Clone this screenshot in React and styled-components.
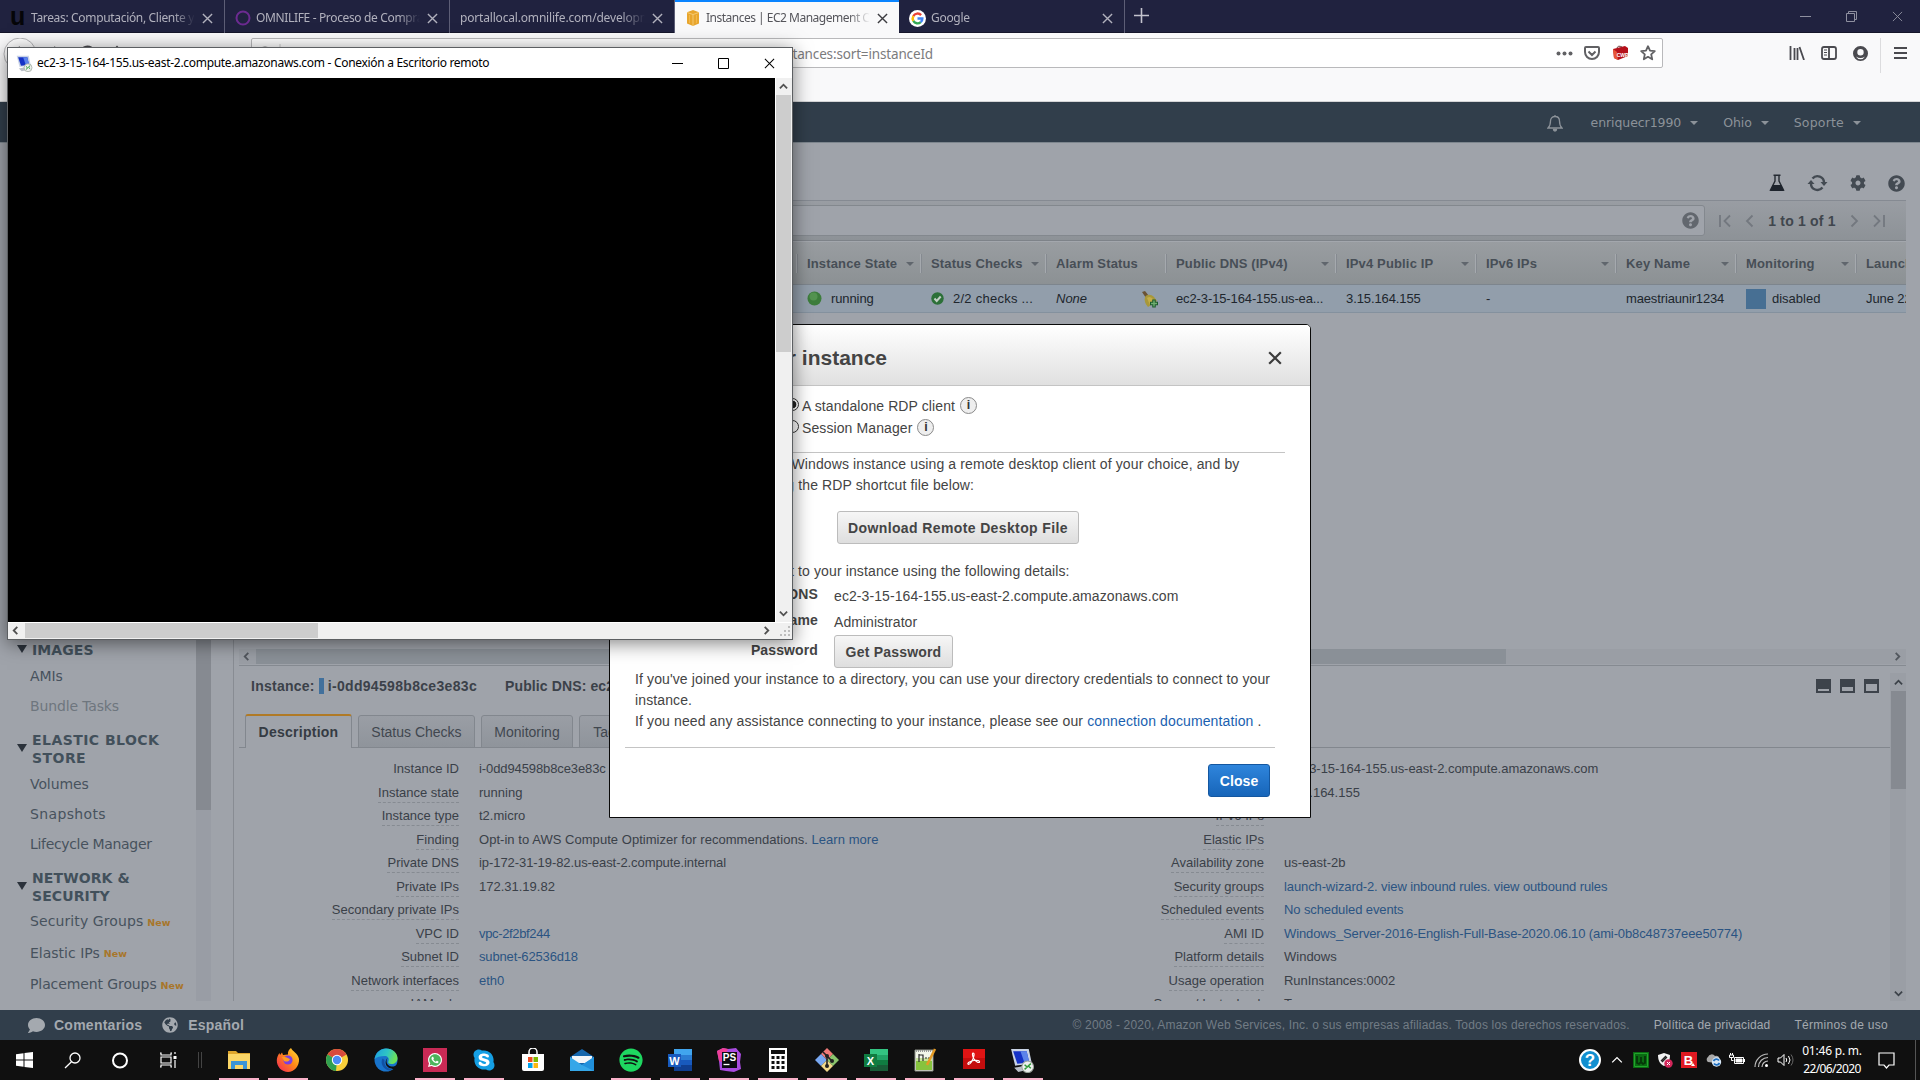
import React from "react";
import styled, { createGlobalStyle, css } from "styled-components";
import { FaQuestionCircle, FaCog, FaComment, FaGlobeAmericas, FaWhatsapp, FaSpotify, FaSkype } from "react-icons/fa";

const ui = `"Noto Sans", "Open Sans", sans-serif`;
const wide = `"DejaVu Sans", Verdana, sans-serif`;
const arial = `"Liberation Sans", Arial, sans-serif`;

const GlobalStyle = createGlobalStyle`
  * { box-sizing: border-box; }
  html, body { margin: 0; padding: 0; overflow: hidden; background: #101010; }
  p { margin: 0; }
`;

const Screen = styled.div`
  position: relative;
  width: 1920px;
  height: 1080px;
  overflow: hidden;
  display: flex;
  flex-direction: column;
  font-family: ${arial};
  background: #9fa3aa;
`;

const Txt = styled.span`
  letter-spacing: ${(p) => p.$ls || 0}px;
  white-space: nowrap;
`;

/* ---------- browser chrome ---------- */
const TabBar = styled.div`
  height: 33px;
  flex: none;
  display: flex;
  background: #20223f;
  border-bottom: 1px solid #15162a;
`;
const Tab = styled.div`
  width: ${(p) => p.$w || 225}px;
  height: 33px;
  display: flex;
  align-items: center;
  padding: 3px 11px 0 10px;
  border-right: 1px solid #5d5e76;
  color: #b1b1bd;
  font: 12px/20px ${ui};
  ${(p) =>
    p.$active &&
    css`
      background: #f9f9fa;
      border-right: 0;
      border-top: 2px solid #0a84ff;
      padding-top: 1px;
      color: #55555b;
    `}
`;
const TabTitle = styled.div`
  flex: 1;
  overflow: hidden;
  white-space: nowrap;
  margin: 0 7px 0 ${(p) => (p.$bare ? 0 : 5)}px;
  letter-spacing: ${(p) => p.$ls || 0}px;
  mask-image: linear-gradient(90deg, #000 87%, transparent 100%);
`;
const ULogo = styled.span`
  width: 16px;
  color: #050508;
  font: bold 25px/20px ${arial};
  margin-top: -5px;
`;
const NewTab = styled.div`
  padding: 8px 0 0 9px;
`;
const WindowButtons = styled.div`
  margin-left: auto;
  display: flex;
  align-items: center;
  gap: 35px;
  padding-right: 17px;
`;
const NavBar = styled.div`
  height: 69px;
  flex: none;
  display: flex;
  align-items: flex-start;
  padding: 5px 0 0 3px;
  background: #f9f9fa;
  border-bottom: 1px solid #d4d4d6;
`;
const NavButtons = styled.div`
  width: 248px;
  display: flex;
  align-items: center;
`;
const UrlBar = styled.div`
  width: 1412px;
  height: 30px;
  display: flex;
  align-items: center;
  background: #fff;
  border: 1px solid #b9b9bb;
  border-radius: 2px;
  padding-right: 6px;
`;
const Url = styled.div`
  width: 625px;
  display: flex;
  justify-content: flex-end;
  padding-top: 2px;
  color: #7b7b7d;
  font: 13.500px/20px ${ui};
`;
const UrlIcons = styled.div`
  margin-left: auto;
  display: flex;
  align-items: center;
  gap: 11.500px;
`;
const BrowserTools = styled.div`
  margin-left: 126px;
  display: flex;
  align-items: center;
  height: 30px;
  gap: 16px;
`;
const ToolSplit = styled.div`
  width: 1px;
  height: 35px;
  margin: 4px -3px 0 -4px;
  background: #dcdcde;
`;

/* ---------- console header ---------- */
const ConsoleNav = styled.div`
  height: 41px;
  flex: none;
  display: flex;
  align-items: center;
  justify-content: flex-end;
  background: #313e4b;
  border-bottom: 1px solid #7d868e;
  padding: 1px 59px 0 0;
  color: #8c9299;
  font: 12.500px/20px ${wide};
`;
const NavItem = styled.div`
  display: flex;
  align-items: center;
  gap: 9px;
  margin-left: ${(p) => p.$ml || 25}px;
`;
const Caret = styled.span`
  width: 0;
  height: 0;
  border: 4px solid transparent;
  border-top: 4.500px solid ${(p) => p.$c || "#8c9299"};
  border-bottom: 0;
`;

/* ---------- body ---------- */
const Body = styled.div`
  height: 867px;
  flex: none;
  display: flex;
`;
const Sidebar = styled.div`
  width: 234px;
  height: 858px;
  display: flex;
  overflow: hidden;
  border-right: 1px solid #888c93;
`;
const Menu = styled.div`
  width: 196px;
  flex: none;
  padding-top: 498px;
  font-family: ${wide};
`;
const MenuGroup = styled.div`
  padding-top: ${(p) => p.$top || 0}px;
`;
const MenuHeading = styled.div`
  display: flex;
  align-items: center;
  gap: 5px;
  padding-left: 17px;
  margin: ${(p) => p.$mt || 0}px 0 ${(p) => p.$mb || 0}px;
  color: #42505b;
  font: bold 14px/18px ${wide};
  letter-spacing: ${(p) => p.$ls || 0}px;
  white-space: nowrap;
`;
const Triangle = styled.span`
  border: 5px solid transparent;
  border-top: 8px solid #2b323b;
  border-bottom: 0;
  margin-top: -3px;
`;
const MenuItem = styled.div`
  height: ${(p) => p.$h || 30}px;
  display: flex;
  align-items: center;
  padding: 1px 0 0 30px;
  color: ${(p) => (p.$dim ? "#6e767e" : "#47525d")};
  font: 14px/20px ${wide};
`;
const NewMark = styled.span`
  margin: 3px 0 0 4px;
  color: #a8762b;
  font: bold 9.500px/14px ${wide};
`;
const MenuScroll = styled.div`
  width: 15px;
  background: #999da5;
`;
const MenuThumb = styled.div`
  height: 667px;
  background: #868a91;
`;

const Main = styled.div`
  width: 1667px;
  margin-left: 5px;
  height: 858px;
  display: flex;
  flex-direction: column;
`;
const Toolbar = styled.div`
  height: 57px;
  flex: none;
  display: flex;
  justify-content: flex-end;
  align-items: center;
  gap: 22px;
  padding: 23px 1px 0 0;
  color: #434a52;
`;
const FilterBar = styled.div`
  height: 41px;
  flex: none;
  display: flex;
  align-items: center;
  border-top: 1px solid #858a92;
  border-bottom: 1px solid #7e8389;
  background: linear-gradient(#999da3, #8d9297);
  padding-right: 21px;
`;
const Search = styled.div`
  width: 1466px;
  height: 31px;
  display: flex;
  align-items: center;
  justify-content: flex-end;
  padding-right: 5px;
  border: 1px solid #83888e;
  border-radius: 3px;
  background: #9fa3aa;
  color: #62676e;
`;
const Pager = styled.div`
  flex: 1;
  display: flex;
  align-items: center;
  justify-content: space-between;
  padding-left: 14px;
  color: #40464d;
  font: bold 14px/20px ${arial};
`;
const Row = styled.div`
  flex: none;
  height: ${(p) => (p.$head ? 43 : 29)}px;
  display: flex;
  overflow: hidden;
  padding-left: 557px;
  background: ${(p) => (p.$head ? "linear-gradient(#999da1, #8c9194)" : "#929eab")};
  border-top: 1px solid ${(p) => (p.$head ? "#a3a7ad" : "#7d858d")};
  border-bottom: ${(p) => (p.$head ? "0" : "1px solid #84919e")};
`;
const Cell = styled.div`
  flex: none;
  width: ${(p) => p.$w}px;
  display: flex;
  align-items: center;
  padding: 0 6px 0 11px;
  white-space: nowrap;
  overflow: hidden;
  color: #20262d;
  font: 13px/20px ${arial};
  letter-spacing: ${(p) => p.$ls || 0}px;
`;
const HeadCell = styled(Cell)`
  height: 19px;
  margin-top: 12px;
  justify-content: space-between;
  padding-left: 10px;
  border-left: 1px solid #a5a9ae;
  color: #474e56;
  font-weight: bold;
  box-shadow: inset 1px 0 #858a90;
`;
const Swatch = styled.span`
  width: 20px;
  height: 20px;
  margin: 1px 6px 0 0;
  background: #476f93;
`;
const Grow = styled.div`
  flex: 1;
`;
const HScroll = styled.div`
  height: 15px;
  flex: none;
  display: flex;
  align-items: center;
  margin-bottom: 1px;
  background: #9a9ea5;
  padding: 0 4px 0 3px;
`;
const HThumb = styled.div`
  width: ${(p) => p.$w}px;
  height: 15px;
  background: ${(p) => p.$c};
  margin: 0 auto 0 5px;
`;
const Details = styled.div`
  height: 336px;
  flex: none;
  display: flex;
  border-top: 1px solid #858a91;
`;
const DetailsMain = styled.div`
  width: 1651px;
  height: 335px;
  display: flex;
  flex-direction: column;
  overflow: hidden;
`;
const VScroll = styled.div`
  width: 16px;
  margin-top: 7px;
  display: flex;
  flex-direction: column;
  align-items: center;
  padding: 5px 0 3px;
  background: #9a9ea5;
`;
const VThumb = styled.div`
  width: 15px;
  height: 98px;
  margin: 4px 0 auto;
  background: #868a91;
`;
const Summary = styled.div`
  height: 40px;
  flex: none;
  display: flex;
  align-items: center;
  padding: 0 11px 0 12px;
  color: #3b4149;
  font: bold 14px/20px ${arial};
`;
const IdBar = styled.span`
  width: 5px;
  height: 16px;
  margin: 0 4px;
  background: #41709c;
`;
const PaneButtons = styled.div`
  margin: 0 0 1px auto;
  display: flex;
  gap: 9px;
`;
const PaneButton = styled.span`
  width: 15px;
  height: 14px;
  border: 2px solid #3d434b;
  border-top-width: ${(p) => p.$top}px;
`;
const Tabs = styled.div`
  height: 42px;
  flex: none;
  display: flex;
  align-items: flex-end;
  gap: 6px;
  padding-left: 6px;
  box-shadow: inset 0 -1px #82878e;
`;
const DetailTab = styled.div`
  width: ${(p) => p.$w}px;
  height: 33px;
  display: flex;
  align-items: center;
  justify-content: center;
  border: 1px solid #82878e;
  border-radius: 3px 3px 0 0;
  background: linear-gradient(#9a9ea5, #8f949b);
  color: #41474f;
  font: 14px/20px ${arial};
  ${(p) =>
    p.$active &&
    css`
      height: 34px;
      border-top: 2px solid #b07a26;
      border-bottom: 0;
      background: #9fa3aa;
      font-weight: bold;
      color: #353b43;
      letter-spacing: 0.25px;
    `}
`;
const Facts = styled.div`
  display: grid;
  grid-template-columns: 805px 1fr;
  padding-top: 9px;
`;
const Fact = styled.div`
  height: 23.500px;
  display: grid;
  grid-template-columns: 220px 1fr;
  column-gap: 20px;
  align-items: center;
  color: #3a4048;
  font: 13px/17px ${arial};
`;
const FactLabel = styled.span`
  justify-self: end;
  padding-bottom: 1px;
  margin-top: 2px;
  border-bottom: 1px dashed ${(p) => (p.$plain ? "transparent" : "#868b92")};
`;
const Link = styled.span`
  color: ${(p) => p.$c || "#2b5482"};
`;
const Footer = styled.div`
  height: 30px;
  flex: none;
  display: flex;
  align-items: center;
  background: #313e4b;
  padding: 0 32px 0 28px;
  color: #a4a9af;
  font: bold 14px/20px ${arial};
`;
const Legal = styled.div`
  margin-left: auto;
  display: flex;
  gap: 24px;
  font: 12px/20px ${arial};
`;
const Dim = styled(Txt)`
  color: #727c85;
`;
const Gap = styled.span`
  width: ${(p) => p.$w}px;
  flex: none;
`;

/* ---------- modal ---------- */
const Modal = styled.div`
  position: absolute;
  left: 609px;
  top: 324px;
  width: 702px;
  height: 494px;
  display: flex;
  flex-direction: column;
  background: #fff;
  border: 1px solid #0a0a0a;
  border-radius: 5px 5px 0 0;
  overflow: hidden;
  color: #444;
  font: 14px/21px ${arial};
`;
const ModalHead = styled.div`
  height: 61px;
  flex: none;
  display: flex;
  align-items: center;
  justify-content: space-between;
  padding: 5px 28px 0 25px;
  background: linear-gradient(#fff, #e0e0e0);
  border-bottom: 1px solid #c4c4c4;
  font: bold 21px/26px ${arial};
`;
const ModalBody = styled.div`
  padding: 9px 25px 0;
  display: flex;
  flex-direction: column;
  white-space: nowrap;
  letter-spacing: ${(p) => p.$ls || 0}px;
`;
const RadioRow = styled.div`
  height: 22px;
  display: flex;
  align-items: center;
  padding-left: 151px;
  letter-spacing: 0.1px;
`;
const Radio = styled.span`
  width: 13px;
  height: 13px;
  border: 1px solid #333;
  border-radius: 50%;
  margin: 0 3px 3px 0;
  background: ${(p) => (p.$on ? "radial-gradient(#222 0 3.5px, #fff 4.2px)" : "#fff")};
`;
const Info = styled.span`
  width: 17px;
  height: 17px;
  margin: 0 0 2px 5px;
  border: 1px solid #8a8a8a;
  border-radius: 50%;
  background: #eee;
  color: #333;
  text-align: center;
  font: bold 12.500px/15px ${arial};
`;
const Rule = styled.div`
  height: 1px;
  flex: none;
  margin: ${(p) => p.$m};
  background: #c4c4c4;
`;
const Button = styled.div`
  width: ${(p) => p.$w}px;
  height: 33px;
  flex: none;
  margin: ${(p) => p.$m || 0};
  display: flex;
  align-items: center;
  justify-content: center;
  border: 1px solid ${(p) => (p.$primary ? "#1457a0" : "#bcbcbc")};
  border-radius: 3px;
  background: ${(p) => (p.$primary ? "linear-gradient(#2f85dc, #1765b9)" : "linear-gradient(#f6f6f6, #dedede)")};
  color: ${(p) => (p.$primary ? "#fff" : "#444")};
  font: bold 14px/20px ${arial};
  letter-spacing: ${(p) => p.$ls || 0}px;
`;
const Credential = styled.div`
  height: ${(p) => p.$h || 25}px;
  display: grid;
  grid-template-columns: 183px 1fr;
  column-gap: 16px;
  align-items: center;
`;
const CredLabel = styled.b`
  text-align: right;
  margin-top: ${(p) => p.$mt ?? -4}px;
`;

/* ---------- remote desktop window ---------- */
const RdpWindow = styled.div`
  position: absolute;
  left: 7px;
  top: 47px;
  width: 786px;
  height: 593px;
  display: flex;
  flex-direction: column;
  border: 1px solid #5c5f62;
  background: #f0f0f0;
  box-shadow: 0 3px 18px rgba(0, 0, 0, 0.5);
`;
const RdpTitle = styled.div`
  height: 30px;
  flex: none;
  display: flex;
  align-items: center;
  padding: 0 17px 0 8px;
  background: #fff;
  color: #000;
  font: 12px/20px ${ui};
`;
const RdpButtons = styled.div`
  margin-left: auto;
  display: flex;
  gap: 35px;
`;
const RdpRow = styled.div`
  display: flex;
  height: 544px;
`;
const RdpScreen = styled.div`
  width: 767px;
  background: #000;
`;
const RdpV = styled.div`
  flex: 1;
  display: flex;
  flex-direction: column;
  align-items: center;
  padding: 4px 1px 4px 0;
  border-left: 1px solid #fff;
`;
const RdpVThumb = styled.div`
  width: 15px;
  height: 257px;
  margin: 4px 0 auto;
  background: #cdcdcd;
`;
const RdpH = styled.div`
  height: 16px;
  display: flex;
  align-items: center;
  padding: 0 2px 0 3px;
  border-top: 1px solid #fff;
`;

/* ---------- taskbar ---------- */
const Taskbar = styled.div`
  height: 40px;
  flex: none;
  display: flex;
  background: #101010;
  color: #fff;
`;
const Apps = styled.div`
  display: flex;
  padding-left: ${(p) => p.$pl || 0}px;
`;
const AppButton = styled.div`
  width: 49px;
  height: 40px;
  display: flex;
  align-items: center;
  justify-content: center;
  padding: 0 4.500px;
  background: ${(p) => (p.$open ? "linear-gradient(#f9b1c9, #f9b1c9) center bottom / 40px 2px no-repeat" : "none")};
`;
const SystemButton = styled.div`
  width: 48px;
  height: 40px;
  display: flex;
  align-items: center;
  justify-content: center;
`;
const Splitter = styled.div`
  width: 4px;
  height: 16px;
  margin: 12px 0 0 6px;
  border: solid #444;
  border-width: 0 1px;
`;
const Tray = styled.div`
  margin-left: auto;
  display: flex;
  align-items: center;
`;
const TrayIcon = styled.div`
  width: ${(p) => p.$w || 24}px;
  display: flex;
  justify-content: center;
`;
const Clock = styled.div`
  width: 70px;
  text-align: center;
  white-space: nowrap;
  font: 12px/18px ${ui};
  letter-spacing: ${(p) => p.$ls || 0}px;
`;
const EndLine = styled.div`
  width: 5px;
  height: 40px;
  margin-left: 20px;
  border-left: 1px solid #555;
`;

/* ---------- icons ---------- */
const Cross = ({ s = 11, c = "currentColor", w = 1.5 }) => (
  <svg width={s} height={s} viewBox="0 0 12 12" stroke={c} strokeWidth={w}>
    <path d="M1 1l10 10M11 1L1 11" />
  </svg>
);
const Chevron = ({ r = 0, s = 9, c = "#505050", w = 2 }) => (
  <svg width={s} height={s} viewBox="0 0 10 10" fill="none" stroke={c} strokeWidth={w}>
    <path d="M1 7l4-4 4 4" transform={`rotate(${r} 5 5)`} />
  </svg>
);
const PageArrow = ({ d }) => (
  <svg width="12" height="14" viewBox="0 0 12 14" fill="none" stroke="#73787f" strokeWidth="1.8">
    <path d={d} />
  </svg>
);
const BackIcons = () => (
  <svg width="240" height="34" viewBox="0 0 240 34" fill="none" stroke="#4a4a4f" strokeWidth="2">
    <circle cx="17" cy="16" r="16" fill="#fff" stroke="#b5b5b8" strokeWidth="1" />
    <path d="M17 9l-6 6 6 6M11 15h13M51 9l6 6-6 6M44 15h13M91 13a7 7 0 1 0 0 5M107 17l7-8 7 8" />
  </svg>
);
const UrlLead = () => (
  <svg width="56" height="26" viewBox="0 0 56 26" fill="none" stroke="#6a6a6d" strokeWidth="2">
    <circle cx="13" cy="14" r="6.5" />
    <path d="M28 4v20" stroke="#ccc" strokeWidth="1" />
    <path d="M38 14v-2a4 4 0 0 1 8 0v2M36 14h12v8H36z" />
  </svg>
);
const AwsCube = () => (
  <svg width="16" height="16" viewBox="0 0 16 16">
    <path d="M8 0l6 2.200v11.300L8 16l-6-2.500V2.200z" fill="#e8a62e" />
    <path d="M8 4.500V16M2 2.500l6 2 6-2" stroke="#f9d384" fill="none" strokeWidth=".8" />
    <path d="M4.500 5v8M11.500 5v8" stroke="#f5bd52" strokeWidth=".8" />
  </svg>
);
const Google = () => (
  <svg width="17" height="17" viewBox="0 0 18 18">
    <circle cx="9" cy="9" r="9" fill="#fff" />
    <g fill="none" strokeWidth="2.6">
      <path d="M4.600 6.400A5.100 5.100 0 0 1 12.800 5.400" stroke="#ea4335" />
      <path d="M4.600 6.400a5.400 5.400 0 0 0 0 5.200" stroke="#fbbc05" />
      <path d="M4.600 11.600a5.100 5.100 0 0 0 7.800 1.300" stroke="#34a853" />
      <path d="M9 9h5.100a5 5 0 0 1-1.700 3.900" stroke="#4285f4" />
    </g>
  </svg>
);
const Flask = () => (
  <svg width="16" height="18" viewBox="0 0 16 18">
    <path d="M4.500 1.200h7M6 1.500v5.500L1.500 16h13L10 7V1.500" fill="none" stroke="#252b33" strokeWidth="1.400" />
    <path d="M3.700 11h8.600l2.700 6H1z" fill="#1d232c" />
  </svg>
);
const Refresh = () => (
  <svg width="21" height="18" viewBox="0 0 21 18" fill="none" stroke="#434a52" strokeWidth="2.400">
    <path d="M5.500 4.600A6.500 6.500 0 0 1 17 9M15.500 13.600A6.500 6.500 0 0 1 4 9" />
    <path d="M13.500 8h7L17 12zM.5 10h7L4 6z" fill="#434a52" stroke="none" />
  </svg>
);
const Bell = () => (
  <svg width="16" height="18" viewBox="0 0 16 18" fill="none" stroke="#8c9299" strokeWidth="1.300">
    <path d="M8 1v1.500M1 14c2.300-2 2.500-4 2.500-7 0-3 2-4.500 4.500-4.500S12.500 4 12.500 7c0 3 .2 5 2.500 7z" />
    <path d="M6.500 15.500a1.500 1.500 0 0 0 3 0z" fill="#8c9299" />
  </svg>
);
const AlarmBell = () => (
  <svg width="18" height="18" viewBox="0 0 18 18">
    <path d="M1 2l3-1 4 5-3 2z" fill="#6b5335" />
    <path d="M4 7c2-3 6-3 9 0l3 4-9 6C4 14 3 10 4 7z" fill="#a8983a" />
    <path d="M6 8c2-2 4-1 6 1l-3 6z" fill="#c4ad48" />
    <path d="M13 9.500v8M9 13.500h8" stroke="#1e5c2f" strokeWidth="3.500" />
    <path d="M13 10.500v6M10 13.500h6" stroke="#6fae70" strokeWidth="1.400" />
  </svg>
);
const RdpIcon = ({ s = 17 }) => (
  <svg width={s} height={s} viewBox="0 0 24 24">
    <path d="M1 1h17l3 14-16 2z" fill="#c9d3e6" />
    <path d="M3 3h13l2.500 11-11.500 1z" fill="#1532c6" />
    <path d="M10 3h6l2.500 11-4.500.5z" fill="#5c83ea" />
    <path d="M4 19l10-2 2 4-8 2z" fill="#b9bfc8" />
    <circle cx="17" cy="18" r="5.600" fill="#eef0ee" stroke="#9aa39a" />
    <path d="M14 16l2.500 2.300L14 20.500M20 15l-2.500 2.200L20 19.500" stroke="#2e9c38" strokeWidth="1.400" fill="none" />
  </svg>
);

const Svg24 = ({ children, s = 24 }) => (
  <svg width={s} height={s} viewBox="0 0 24 24">
    {children}
  </svg>
);
const Glyph = styled.text`
  font-family: ${arial};
  font-weight: bold;
  text-anchor: middle;
`;

const icons = {
  folder: (
    <Svg24>
      <path d="M1 3h8l2 2h12v16H1z" fill="#dfa62c" />
      <path d="M1 6h22v15H1z" fill="#fbd667" />
      <path d="M4 21v-8h16v8h-4v-4H8v4z" fill="#3b94d6" />
    </Svg24>
  ),
  firefox: (
    <Svg24>
      <defs>
        <linearGradient id="ff" x1="1" y1="0" x2="0" y2="1">
          <stop offset="0" stopColor="#ffe33d" />
          <stop offset=".45" stopColor="#ff8b16" />
          <stop offset="1" stopColor="#f4205b" />
        </linearGradient>
      </defs>
      <path d="M15 0c1 3 7 5 8 11 .6 7-5 13-11 13S.5 19 .8 12C1 9 2 7 3.500 5l.5 2 2-2.500 1 2.500 5-.5c-.5-3 1-5 3-6.500z" fill="url(#ff)" />
      <circle cx="12" cy="12" r="4.600" fill="#7b3fe0" />
      <path d="M6 9c3-1 5 1 8 2-1 3-4 3-6 2z" fill="#ff9a1f" />
    </Svg24>
  ),
  chrome: (
    <Svg24>
      <circle cx="12" cy="12" r="11" fill="#f8cf3a" />
      <path d="M12 12L2.500 6.500a11 11 0 0 1 19 0z" fill="#d94b3d" />
      <path d="M12 12L2.500 6.500A11 11 0 0 0 11 23z" fill="#30a050" />
      <circle cx="12" cy="12" r="5.200" fill="#fff" />
      <circle cx="12" cy="12" r="4.200" fill="#4c8bf5" />
    </Svg24>
  ),
  edge: (
    <Svg24>
      <defs>
        <linearGradient id="ed" x1="0" y1="0" x2="1" y2=".3">
          <stop offset="0" stopColor="#1b9de2" />
          <stop offset=".6" stopColor="#2fc6c3" />
          <stop offset="1" stopColor="#6be05a" />
        </linearGradient>
      </defs>
      <circle cx="12" cy="12" r="11.500" fill="#1873cb" />
      <path d="M.6 11C2 4 7 .5 12 .5c7 0 11.500 5 11.500 9.500 0 4-3 6-6 6-3 0-4-1-3-3 1-3-1-5-4-5-4 0-8 1-9.900 3z" fill="url(#ed)" />
      <path d="M13.500 10c-2.500 4 0 8 4 8.500 2 .3 4-.5 6-2l1 3-3 3-4-2c-5-.5-8-6-4-10.500z" fill="#101010" />
      <path d="M8.500 10.500c-2.500 4.500.5 11 7 12l4-1.500c-6 1-10-4-9-9z" fill="#1251a4" />
    </Svg24>
  ),
  word: ["#185abd", "#41a5ee", "#2b7cd3", "#103f91", "W"],
  excel: ["#107c41", "#33c481", "#21a366", "#185c37", "X"],
};
const Office = ({ v }) => (
  <Svg24>
    <path d="M6 1h18v6H6z" fill={v[1]} />
    <path d="M6 7h18v5H6z" fill={v[2]} />
    <path d="M6 12h18v5H6z" fill={v[0]} />
    <path d="M6 17h18v6H6z" fill={v[3]} />
    <path d="M0 6h13v13H0z" fill={v[0]} />
    <Glyph x="6.500" y="16.500" fontSize="11" fill="#fff">{v[4]}</Glyph>
  </Svg24>
);
const apps = [
  [icons.folder, 1],
  [icons.firefox, 1],
  [icons.chrome, 0],
  [icons.edge, 0],
  [
    <Svg24>
      <path d="M0 0h24v24H0z" fill="#c92a55" />
      <circle cx="12" cy="12" r="6.500" fill="#4cb55b" />
      <FaWhatsapp x="4" y="4" size={16} color="#fff" />
    </Svg24>,
    1,
  ],
  [
    <Svg24>
      <circle cx="12" cy="12" r="8" fill="#fff" />
      <FaSkype x="0" y="0" size={24} color="#159fe4" />
    </Svg24>,
    1,
  ],
  [
    <Svg24>
      <path d="M8 7V4a4 4 0 0 1 8 0v3" fill="none" stroke="#fff" strokeWidth="1.500" />
      <path d="M1 6h22v15q0 2-2 2H3q-2 0-2-2z" fill="#fff" />
      <path d="M7 9h4.500v5H7z" fill="#f04e23" />
      <path d="M12.500 9H17v5h-4.500z" fill="#7fb900" />
      <path d="M7 15h4.500v5H7z" fill="#00a3ee" />
      <path d="M12.500 15H17v5h-4.500z" fill="#fdb813" />
    </Svg24>,
    0,
  ],
  [
    <Svg24>
      <path d="M0 9l12-8 12 8v14H0z" fill="#1466ad" />
      <path d="M2 8h20v7H2z" fill="#f1f5f9" />
      <path d="M0 9l12 8 12-8v14H0z" fill="#35a7e8" />
      <path d="M12 17l12-8v14z" fill="#2190db" />
    </Svg24>,
    0,
  ],
  [<FaSpotify size={24} color="#1ed760" />, 1],
  [<Office v={icons.word} />, 1],
  [
    <Svg24>
      <path d="M0 3L6 0l5 1 8-1 5 6-1 8 1 7-7 3-8-1-6-1-1-9z" fill="#a94ce0" />
      <path d="M0 3L6 0l5 1-6 13-3-1z" fill="#ee3f96" />
      <path d="M5 4h15v16H5z" fill="#0c0c10" />
      <Glyph x="12.500" y="13" fontSize="10" fill="#fff">PS</Glyph>
      <path d="M6.500 16.500h6" stroke="#fff" strokeWidth="1.300" />
    </Svg24>,
    1,
  ],
  [
    <Svg24>
      <path d="M3 0h18v24H3z" fill="#fff" />
      <path d="M5 2h14v4H5z" fill="#111" />
      <path d="M5.500 9.500h13M5.500 14.500h13M5.500 19.500h13" stroke="#111" strokeWidth="3" strokeDasharray="3 2" />
    </Svg24>,
    1,
  ],
  [
    <Svg24>
      <path d="M12 0l6 6-6 6-6-6z" fill="#ef7a78" />
      <path d="M6 6l6 6-6 6-6-6z" fill="#79a8f2" />
      <path d="M18 6l6 6-6 6-6-6z" fill="#8ac46c" />
      <path d="M12 12l6 6-6 6-6-6z" fill="#f2d98a" />
      <path d="M8 4l4 4v11M12 8l5 5" stroke="#222" strokeWidth="1.600" fill="none" />
      <circle cx="12" cy="8" r="2" fill="#222" />
      <circle cx="12" cy="18" r="2" fill="#222" />
      <circle cx="17" cy="13" r="2" fill="#222" />
    </Svg24>,
    1,
  ],
  [<Office v={icons.excel} />, 1],
  [
    <Svg24>
      <path d="M2 2h18v21H2z" fill="#f3f6ea" stroke="#8b8f86" />
      <path d="M3 13h16v9H3z" fill="#86c33e" />
      <path d="M3 10h16v3H3z" fill="#c7e29c" />
      <path d="M6 6v8M6 7h4v6M12 10h2M15 10h2" stroke="#2a2a2a" strokeWidth="1.200" fill="none" />
      <path d="M3 3h16" stroke="#999" strokeWidth="2" strokeDasharray="1 1" />
      <path d="M22 1l-8 16" stroke="#e59b25" strokeWidth="2.500" />
    </Svg24>,
    1,
  ],
  [
    <Svg24>
      <path d="M1 1h22v20H1z" fill="#c40d0d" />
      <path d="M1 1h22v9H1z" fill="#e01414" />
      <path d="M11 5c2 0 1 4-1 8-1 2-3 4-4 3s3-3 6-3.500 6 0 5.500 1.500-4-.5-5.500-3S10 5 11 5z" fill="none" stroke="#fff" strokeWidth="1.200" />
    </Svg24>,
    1,
  ],
  [<RdpIcon s={25} />, 1],
];

/* ---------- data ---------- */
const columns = [
  ["Instance State", 124, 1],
  ["Status Checks", 125, 1],
  ["Alarm Status", 120, 0],
  ["Public DNS (IPv4)", 170, 1],
  ["IPv4 Public IP", 140, 1],
  ["IPv6 IPs", 140, 1],
  ["Key Name", 120, 1],
  ["Monitoring", 120, 1],
  ["Launch Time", 120, 0],
];
const leftFacts = [
  ["Instance ID", "i-0dd94598b8ce3e83c", -0.1],
  ["Instance state", "running"],
  ["Instance type", "t2.micro"],
  ["Finding", <>Opt-in to AWS Compute Optimizer for recommendations. <Link>Learn more</Link></>, 0.04],
  ["Private DNS", "ip-172-31-19-82.us-east-2.compute.internal", -0.07],
  ["Private IPs", "172.31.19.82"],
  ["Secondary private IPs", ""],
  ["VPC ID", <Link>vpc-2f2bf244</Link>, -0.35],
  ["Subnet ID", <Link>subnet-62536d18</Link>, -0.15],
  ["Network interfaces", <Link>eth0</Link>],
  ["IAM role", ""],
];
const rightFacts = [
  ["Public DNS (IPv4)", "ec2-3-15-164-155.us-east-2.compute.amazonaws.com", -0.03],
  ["IPv4 Public IP", "3.15.164.155"],
  ["IPv6 IPs", ""],
  ["Elastic IPs", ""],
  ["Availability zone", "us-east-2b"],
  ["Security groups", <Link>launch-wizard-2. view inbound rules. view outbound rules</Link>, -0.11],
  ["Scheduled events", <Link>No scheduled events</Link>, -0.1],
  ["AMI ID", <Link>Windows_Server-2016-English-Full-Base-2020.06.10 (ami-0b8c48737eee50774)</Link>, -0.12],
  ["Platform details", "Windows"],
  ["Usage operation", "RunInstances:0002", -0.05],
  ["Source/dest. check", "True"],
];
const FactList = ({ items }) => (
  <div>
    {items.map(([k, v, ls], i) => (
      <Fact key={k}>
        <FactLabel $plain={i === 0}>{k}</FactLabel>
        <Txt $ls={ls}>{v}</Txt>
      </Fact>
    ))}
  </div>
);

function Browser() {
  return (
    <>
      <TabBar>
        <Tab>
          <ULogo>u</ULogo>
          <TabTitle $ls={-0.33}>Tareas: Computación, Cliente y</TabTitle>
          <Cross />
        </Tab>
        <Tab>
          <svg width="16" height="16" viewBox="0 0 16 16"><circle cx="8" cy="8" r="6.500" fill="none" stroke="#6c2b91" strokeWidth="2" /></svg>
          <TabTitle $ls={-0.35}>OMNILIFE - Proceso de Compras</TabTitle>
          <Cross />
        </Tab>
        <Tab>
          <TabTitle $bare $ls={-0.18}>portallocal.omnilife.com/development</TabTitle>
          <Cross />
        </Tab>
        <Tab $active $w={224}>
          <AwsCube />
          <TabTitle $ls={-0.5}>Instances | EC2 Management Console</TabTitle>
          <Cross c="#3c3c40" />
        </Tab>
        <Tab $w={226}>
          <Google />
          <TabTitle $ls={-0.3}>Google</TabTitle>
          <Cross />
        </Tab>
        <NewTab>
          <svg width="15" height="15" viewBox="0 0 15 15" stroke="#c3c3cd" strokeWidth="1.600"><path d="M7.500 0v15M0 7.500h15" /></svg>
        </NewTab>
        <WindowButtons>
          <svg width="11" height="11" stroke="#8f90a0"><path d="M0 5.500h11" /></svg>
          <svg width="11" height="11" viewBox="0 0 11 11" fill="none" stroke="#8f90a0"><path d="M.5 2.500h8v8h-8zM2.500 2.500v-2h8v8h-2" /></svg>
          <Cross c="#8f90a0" w={1} />
        </WindowButtons>
      </TabBar>
      <NavBar>
        <NavButtons><BackIcons /></NavButtons>
        <UrlBar>
          <UrlLead />
          <Url><Txt $ls={-0.15}>https://us-east-2.console.aws.amazon.com/ec2/v2/home?region=us-east-2#Instances:sort=instanceId</Txt></Url>
          <UrlIcons>
            <svg width="17" height="5" fill="#616164"><circle cx="2.500" cy="2.500" r="2" /><circle cx="8.500" cy="2.500" r="2" /><circle cx="14.500" cy="2.500" r="2" /></svg>
            <svg width="16" height="15" viewBox="0 0 16 15" fill="none" stroke="#616164" strokeWidth="2"><path d="M2 1h12q1 0 1 1v4a7 7 0 0 1-14 0V2q0-1 1-1zM4.500 5.500L8 9l3.500-3.500" /></svg>
            <svg width="17" height="16" viewBox="0 0 17 16"><path d="M1 4l12-3 3 2v8l-10 4-4-2z" fill="#b5101a" /><path d="M1 4l4 3 1 8-4-2z" fill="#e85538" /><path d="M5 3q1-3 5-1" stroke="#704040" fill="none" /><Glyph x="10.500" y="12" fontSize="5" fill="#fff">CWP</Glyph></svg>
            <svg width="16" height="16" viewBox="0 0 16 16" fill="none" stroke="#616164" strokeWidth="1.800" strokeLinejoin="round"><path d="M8 1.200l2 4.500 4.800.5-3.600 3.200 1 4.900L8 11.800l-4.200 2.500 1-4.900L1.200 6.200 6 5.700z" /></svg>
          </UrlIcons>
        </UrlBar>
        <BrowserTools>
          <svg width="16" height="14" viewBox="0 0 16 14" stroke="#4a4a4f" strokeWidth="1.800"><path d="M1.500 0v14M5.500 2v12M8.500 2v12M10.500 1l4.500 13" /></svg>
          <svg width="16" height="14" viewBox="0 0 16 14" fill="none" stroke="#4a4a4f" strokeWidth="1.800"><path d="M3 1h10q2 0 2 2v8q0 2-2 2H3q-2 0-2-2V3q0-2 2-2zM8 1v12" /><path d="M3 4h3M3 6.500h3M3 9h3" strokeWidth="1" /></svg>
          <svg width="15" height="15" viewBox="0 0 15 15" fill="#4a4a4f"><path fillRule="evenodd" d="M7.500 0a7.500 7.500 0 1 0 0 15 7.500 7.500 0 0 0 0-15zM7.500 3a3.200 3.200 0 1 1 0 6.400A3.200 3.200 0 0 1 7.500 3zM3 10.500q4.500 3 9 0-1.500 2.800-4.500 2.800T3 10.500z" /></svg>
          <ToolSplit />
          <svg width="13" height="12" stroke="#4a4a4f" strokeWidth="2"><path d="M0 1h13M0 6h13M0 11h13" /></svg>
        </BrowserTools>
      </NavBar>
    </>
  );
}

function Instances() {
  return (
    <Main>
      <Toolbar>
        <Flask />
        <Refresh />
        <FaCog size={16} />
        <FaQuestionCircle size={17} />
      </Toolbar>
      <FilterBar>
        <Search><FaQuestionCircle size={17} /></Search>
        <Pager>
          <PageArrow d="M1 1v12M11 1.500L5.500 7l5.500 5.500" />
          <PageArrow d="M8.500 1.500L3 7l5.500 5.500" />
          <Txt $ls={0.2}>1 to 1 of 1</Txt>
          <PageArrow d="M3.500 1.500L9 7l-5.500 5.500" />
          <PageArrow d="M1 1.500L6.500 7 1 12.500M11 1v12" />
        </Pager>
      </FilterBar>
      <Row $head>
        {columns.map(([name, w, sort]) => (
          <HeadCell key={name} $w={w}>
            <Txt $ls={0.15}>{name}</Txt>
            {sort ? <Caret $c="#60666d" /> : null}
          </HeadCell>
        ))}
      </Row>
      <Row>
        <Cell $w={124}>
          <svg width="15" height="15"><circle cx="7.500" cy="7.500" r="7" fill="#3d7d3c" /><circle cx="6.500" cy="5.500" r="4" fill="#549450" /></svg>
          <Gap $w={9} /><Txt $ls={-0.1}>running</Txt>
        </Cell>
        <Cell $w={125}>
          <svg width="13" height="13"><circle cx="6.500" cy="6.500" r="6.200" fill="#2c7038" /><path d="M3.500 6.500l2.200 2.500 4-4.500" stroke="#c3d0c6" strokeWidth="2" fill="none" /></svg>
          <Gap $w={9} /><Txt $ls={0.25}>2/2 checks ...</Txt>
        </Cell>
        <Cell $w={120}><i>None</i><Grow /><AlarmBell /></Cell>
        <Cell $w={170} $ls={-0.12}>ec2-3-15-164-155.us-ea...</Cell>
        <Cell $w={140} $ls={-0.1}>3.15.164.155</Cell>
        <Cell $w={140}>-</Cell>
        <Cell $w={120} $ls={-0.14}>maestriaunir1234</Cell>
        <Cell $w={120}><Swatch />disabled</Cell>
        <Cell $w={120} $ls={-0.1}>June 22, 2020</Cell>
      </Row>
      <Grow />
      <HScroll>
        <Chevron r={-90} c="#52575e" />
        <HThumb $w={1250} $c="#8a9097" />
        <Chevron r={90} c="#52575e" />
      </HScroll>
      <Details>
        <DetailsMain>
          <Summary>
            <Txt $ls={0.25}>Instance:</Txt>
            <IdBar />
            <Txt $ls={0.32}>i-0dd94598b8ce3e83c</Txt>
            <Gap $w={28} />
            <Txt $ls={0.12}>Public DNS: ec2-3-15-164-155.us-east-2.compute.amazonaws.com</Txt>
            <PaneButtons>
              <PaneButton $top={10} />
              <PaneButton $top={8} />
              <PaneButton $top={5} />
            </PaneButtons>
          </Summary>
          <Tabs>
            <DetailTab $active $w={107}>Description</DetailTab>
            <DetailTab $w={117}>Status Checks</DetailTab>
            <DetailTab $w={92}>Monitoring</DetailTab>
            <DetailTab $w={58}>Tags</DetailTab>
          </Tabs>
          <Facts>
            <FactList items={leftFacts} />
            <FactList items={rightFacts} />
          </Facts>
        </DetailsMain>
        <VScroll>
          <Chevron c="#3c4249" />
          <VThumb />
          <Chevron r={180} c="#3c4249" />
        </VScroll>
      </Details>
    </Main>
  );
}

function ConnectModal() {
  return (
    <Modal>
      <ModalHead>
        <span>Connect to your instance</span>
        <Cross s={14} c="#3c3c3c" w={1.900} />
      </ModalHead>
      <ModalBody $ls={0.12}>
        <RadioRow><Radio $on />A standalone RDP client<Info>i</Info></RadioRow>
        <RadioRow><Radio />Session Manager<Info>i</Info></RadioRow>
        <Rule $m="13px 0 1px" />
        <p>
          You can connect to your Windows instance using a remote desktop client of your choice, and by<br />
          downloading and running the RDP shortcut file below:
        </p>
        <Button $w={242} $ls={0.38} $m="15px 0 17px 202px">Download Remote Desktop File</Button>
        <p>When prompted, connect to your instance using the following details:</p>
        <Credential $h={28}><CredLabel>Public DNS</CredLabel><Txt $ls={0.09}>ec2-3-15-164-155.us-east-2.compute.amazonaws.com</Txt></Credential>
        <Credential $h={24}><CredLabel>User name</CredLabel><Txt $ls={0.05}>Administrator</Txt></Credential>
        <Credential $h={35}><CredLabel $mt={-3}>Password</CredLabel><Button $w={119} $ls={0.2}>Get Password</Button></Credential>
        <p>
          If you've joined your instance to a directory, you can use your directory credentials to connect to your<br />
          instance.<br />
          If you need any assistance connecting to your instance, please see our{" "}
          <Link $c="#1a5fb0">connection documentation</Link> .
        </p>
        <Rule $m="15px 10px 16px -10px" />
        <Button $primary $w={62} $ls={0.1} $m="0 0 0 573px">Close</Button>
      </ModalBody>
    </Modal>
  );
}

function RemoteDesktop() {
  return (
    <RdpWindow>
      <RdpTitle>
        <RdpIcon />
        <Gap $w={4} />
        <Txt $ls={-0.3}>ec2-3-15-164-155.us-east-2.compute.amazonaws.com - Conexión a Escritorio remoto</Txt>
        <RdpButtons>
          <svg width="11" height="11" stroke="#000"><path d="M0 5.500h11" /></svg>
          <svg width="11" height="11" fill="none" stroke="#000"><path d="M.5.5h10v10H.5z" /></svg>
          <Cross c="#000" w={1.100} />
        </RdpButtons>
      </RdpTitle>
      <RdpRow>
        <RdpScreen />
        <RdpV>
          <Chevron />
          <RdpVThumb />
          <Chevron r={180} />
        </RdpV>
      </RdpRow>
      <RdpH>
        <Chevron r={-90} />
        <HThumb $w={293} $c="#cdcdcd" />
        <Chevron r={90} />
        <Gap $w={9} />
        <svg width="10" height="10" fill="#bdbdbd"><path d="M8 0h2v2H8zM8 4h2v2H8zM4 4h2v2H4zM8 8h2v2H8zM4 8h2v2H4zM0 8h2v2H0z" /></svg>
      </RdpH>
    </RdpWindow>
  );
}

function WindowsTaskbar() {
  return (
    <Taskbar>
      <SystemButton><svg width="17" height="16" viewBox="0 0 17 16" fill="#fff"><path d="M0 2.300L7.500 1.200v6.300H0zM8.500 1L17 0v7.500H8.500zM0 8.500h7.500v6.300L0 13.700zM8.500 8.500H17V16l-8.500-1z" /></svg></SystemButton>
      <SystemButton><svg width="17" height="17" viewBox="0 0 17 17" fill="none" stroke="#fff" strokeWidth="1.300"><circle cx="11" cy="6" r="5" /><path d="M7.500 9.700L1 16" /></svg></SystemButton>
      <SystemButton><svg width="17" height="17"><circle cx="8" cy="8.500" r="7" fill="none" stroke="#fff" strokeWidth="2" /></svg></SystemButton>
      <SystemButton><svg width="17" height="16" viewBox="0 0 17 16" fill="none" stroke="#fff" strokeWidth="1.200"><path d="M0 1h1v2h10V1h1M1 5h10v6H1zM0 15h1v-2h10v2h1M15 0v2M15 8v8" /><path d="M13.500 4h3v3h-3z" fill="#fff" stroke="none" /></svg></SystemButton>
      <Splitter />
      <Apps $pl={12}>
        {apps.map(([icon, open], i) => <AppButton key={i} $open={open}>{icon}</AppButton>)}
      </Apps>
      <Tray>
        <TrayIcon $w={28}>
          <svg width="22" height="22"><circle cx="11" cy="11" r="10" fill="#118fd0" stroke="#fff" strokeWidth="2" /><Glyph x="11" y="17" fontSize="17" fill="#fff">?</Glyph></svg>
        </TrayIcon>
        <TrayIcon $w={25}><Chevron s={12} c="#fff" w={1.100} /></TrayIcon>
        <TrayIcon><svg width="16" height="16"><path d="M0 0h16v16H0z" fill="#0a6b12" /><path d="M1.500 1.500h13v13h-13z" fill="none" stroke="#22a32c" /><path d="M4 4v7l2 1 2-2 2 2 2-1V4M8 5v5" stroke="#06350a" strokeWidth="1.800" fill="none" /></svg></TrayIcon>
        <TrayIcon><svg width="16" height="16"><path d="M7 1l6 2c0 6-2 9-6 11C3 12 1 9 1 3z" fill="#f2f2f2" /><path d="M4 9l5-5M5 10l5-5" stroke="#222" strokeWidth="1.300" /><circle cx="11.500" cy="11.500" r="4.200" fill="#d3265a" /><path d="M10 10l3 3M13 10l-3 3" stroke="#fff" /></svg></TrayIcon>
        <TrayIcon><svg width="16" height="16"><path d="M0 0h16v16H0z" fill="#e01a22" /><Glyph x="7.500" y="12.500" fontSize="13" fill="#fff">B</Glyph><path d="M10 14l2-3 2 3z" fill="#fff" /></svg></TrayIcon>
        <TrayIcon><svg width="17" height="14"><path d="M3 9a3 3 0 0 1 0-5 4 4 0 0 1 7-1 3 3 0 0 1 4 4l-3 3z" fill="#a9a9a9" /><circle cx="11.500" cy="9" r="4.700" fill="#d8e8f6" /><path d="M8.500 8a3.200 3.200 0 0 1 5.500-.5M14.500 10a3.200 3.200 0 0 1-5.500.5" stroke="#1f6fc0" strokeWidth="1.800" fill="none" /></svg></TrayIcon>
        <TrayIcon><svg width="17" height="14" fill="none" stroke="#fff"><path d="M5.500 4.500h9v6h-9zM15.500 6v3M.5 2h4v2.500h-4zM1.500 0v2M3.500 0v2M2.500 4.500v3h2" /><path d="M7 6h6v3H7z" fill="#fff" /></svg></TrayIcon>
        <TrayIcon><svg width="15" height="15" fill="none" stroke="#bbb" strokeWidth="1.200"><path d="M1 14A13 13 0 0 1 14 1M4.500 14A9.500 9.500 0 0 1 14 4.500M8 14a6 6 0 0 1 6-6" /><circle cx="12.500" cy="12.500" r="1.500" fill="#fff" stroke="none" /></svg></TrayIcon>
        <TrayIcon><svg width="17" height="14" fill="none" stroke="#fff"><path d="M1 5h2.500L7 1.500v11L3.500 9H1z" /><path d="M9 5q1.500 2 0 4M11.500 3q3 4 0 8" /><path d="M14 1.500q4 5.500 0 11" stroke="#666" /></svg></TrayIcon>
        <div>
          <Clock $ls={-0.2}>01:46 p. m.</Clock>
          <Clock $ls={-0.65}>22/06/2020</Clock>
        </div>
        <Gap $w={11} />
        <svg width="17" height="17" fill="none" stroke="#fff" strokeWidth="1.200"><path d="M1 1h15v12h-5l-2.500 3L6 13H1z" /></svg>
        <EndLine />
      </Tray>
    </Taskbar>
  );
}

export default function App() {
  return (
    <Screen>
      <GlobalStyle />
      <Browser />
      <ConsoleNav>
        <Bell />
        <NavItem $ml={28}><Txt $ls={-0.07}>enriquecr1990</Txt><Caret /></NavItem>
        <NavItem><Txt $ls={-0.1}>Ohio</Txt><Caret /></NavItem>
        <NavItem><Txt $ls={0.2}>Soporte</Txt><Caret /></NavItem>
      </ConsoleNav>
      <Body>
        <Sidebar>
          <Menu>
            <MenuHeading $mb={1} $ls={0.1}><Triangle />IMAGES</MenuHeading>
            <MenuItem><Txt $ls={-0.1}>AMIs</Txt></MenuItem>
            <MenuItem $dim><Txt $ls={-0.15}>Bundle Tasks</Txt></MenuItem>
            <MenuGroup $top={11}>
              <MenuHeading $mb={1} $ls={0.45}><Triangle /><span>ELASTIC BLOCK<br />STORE</span></MenuHeading>
              <MenuItem><Txt $ls={-0.1}>Volumes</Txt></MenuItem>
              <MenuItem><Txt $ls={0.35}>Snapshots</Txt></MenuItem>
              <MenuItem><Txt $ls={-0.33}>Lifecycle Manager</Txt></MenuItem>
            </MenuGroup>
            <MenuGroup $top={11}>
              <MenuHeading $ls={0.1}><Triangle /><span>NETWORK &amp;<br />SECURITY</span></MenuHeading>
              <MenuItem $h={31.5}><Txt $ls={0.1}>Security Groups</Txt><NewMark>New</NewMark></MenuItem>
              <MenuItem $h={31.5}><Txt>Elastic IPs</Txt><NewMark>New</NewMark></MenuItem>
              <MenuItem $h={31.5}><Txt $ls={-0.1}>Placement Groups</Txt><NewMark>New</NewMark></MenuItem>
            </MenuGroup>
          </Menu>
          <MenuScroll><MenuThumb /></MenuScroll>
        </Sidebar>
        <Instances />
      </Body>
      <Footer>
        <FaComment size={17} />
        <Gap $w={9} />
        <Txt $ls={0.25}>Comentarios</Txt>
        <Gap $w={20} />
        <FaGlobeAmericas size={16} />
        <Gap $w={10} />
        <Txt $ls={0.2}>Español</Txt>
        <Legal>
          <Dim $ls={0.17}>© 2008 - 2020, Amazon Web Services, Inc. o sus empresas afiliadas. Todos los derechos reservados.</Dim>
          <Txt $ls={0.12}>Política de privacidad</Txt>
          <Txt $ls={0.28}>Términos de uso</Txt>
        </Legal>
      </Footer>
      <WindowsTaskbar />
      <ConnectModal />
      <RemoteDesktop />
    </Screen>
  );
}
